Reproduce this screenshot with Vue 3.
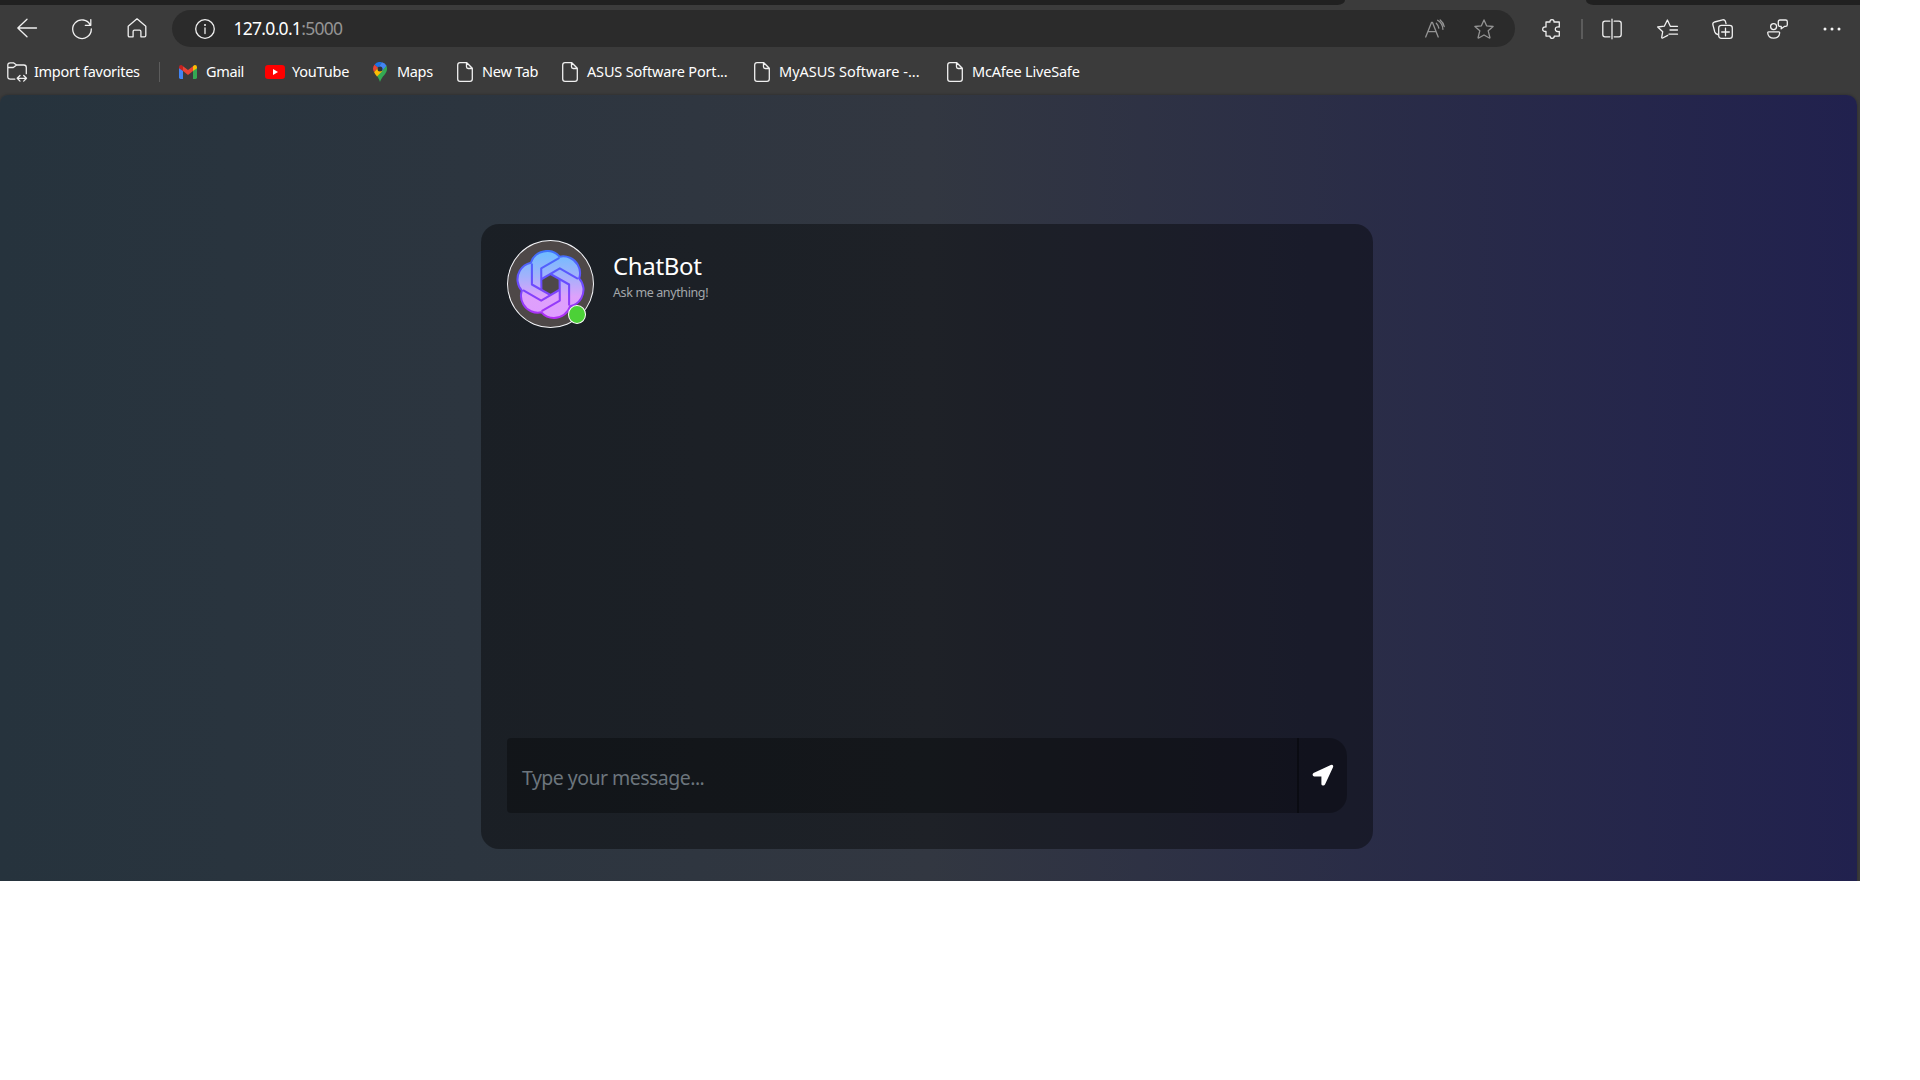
<script setup>
const bookmarks = [
  { label: 'Gmail', icon: 'gmail', width: 86, gap: 9, track: -0.35 },
  { label: 'YouTube', icon: 'youtube', width: 108, gap: 7, track: -0.2 },
  { label: 'Maps', icon: 'maps', width: 84, gap: 10, track: -0.35 },
  { label: 'New Tab', icon: 'page', width: 105, gap: 9, track: -0.25 },
  { label: 'ASUS Software Port...', icon: 'page', width: 192, gap: 9, track: -0.17 },
  { label: 'MyASUS Software -...', icon: 'page', width: 193, gap: 9, track: 0 },
  { label: 'McAfee LiveSafe', icon: 'page', width: 140, gap: 9, track: -0.2 },
]

const turns = [0, 60, 120, 180, 240, 300]
</script>

<template>
  <div class="window">
    <div class="tabstrip">
      <div class="tabs-left"></div>
      <div class="tabs-right"></div>
    </div>

    <div class="toolbar">
      <svg class="ico back" viewBox="0 0 20 20"><path d="M19.5 10H.8M10 1.2L.8 10l9.2 8.800" /></svg>
      <svg class="ico reload" viewBox="0 0 20 20"><path d="M18.4 6.2A9.3 9.3 0 1 0 19.3 10M18.8.6v5.7h-5.5" /></svg>
      <svg class="ico home" viewBox="0 0 20 20"><path d="M1.2 8.2L10 .8l8.8 7.4v9.3q0 1.3-1.3 1.3h-3.6v-5.4q0-1.3-1.3-1.3H7.4q-1.3 0-1.3 1.3v5.4H2.5q-1.3 0-1.3-1.3z" /></svg>

      <div class="address">
        <svg class="ico" viewBox="0 0 20 20"><circle cx="10" cy="10" r="9.3" /><path d="M10 9v5.6" /><circle class="solid" cx="10" cy="6" r="1" /></svg>
        <span class="url">127.0.0.1<span class="port">:5000</span></span>
        <svg class="ico dim read" viewBox="0 0 20 20"><path d="M.7 18L6.6 3.3h.8L13.2 18M2.8 12.6h8.4M11.3 4.2q2 2 2.5 5M12.6 1.3q5 3 5.300 9M15.2 1q3.5 3 4 6.500" /></svg>
        <svg class="ico dim star" viewBox="0 0 20 20"><path d="M10 .9l2.6 5.9 6.5.7-4.9 4.3 1.7 6.700q.1.700-.6.500L10 16l-5.300 3q-.7.200-.6-.5l1.700-6.700L.9 7.500l6.500-.7z" /></svg>
      </div>

      <svg class="ico puzzle" viewBox="0 0 20 20"><path d="M4 3h4q-.2-2.300 2-2.300T12 3h5.300v5q-4-.5-4 2.200t4 2.300v4.600h-5q0 2.200-2.100 2.200T8 17.100H4v-4.600q-3.300.2-3.300-2.300T4 8z" /></svg>
      <div class="rule"></div>
      <svg class="ico split" viewBox="0 0 20 20"><path d="M7.8 2.200H3Q.8 2.200.8 4.400v11.200q0 2.200 2.200 2.200h4.800M12.200 2.200H17q2.200 0 2.200 2.200v11.200q0 2.200-2.200 2.200h-4.800M10 .2v19.600" /></svg>
      <svg class="ico favs" viewBox="0 0 21 20"><path d="M15 7.300h-1.700L10.400 1 7.300 7.200.7 8l5 4.700-1 5.700q.1 1 1 .6l5-2.600M13 11h7.500M12 15.200h8.500M14.500 7.300h6" /></svg>
      <svg class="ico coll" viewBox="0 0 21 20"><path d="M5.800 15.500Q3.500 15 2.800 13L.9 5.800Q.4 3.700 2.500 3L10.600.8q2-.4 2.800 1.500l.6 2.300" /><rect x="6.700" y="6.300" width="13.600" height="13" rx="2.600" /><path d="M13.500 9.200v7.600M9.700 13h7.600" /></svg>
      <svg class="ico feedback" viewBox="0 0 21 20"><circle cx="6.600" cy="7.600" r="3" /><path d="M1.500 12.800h10.300q.9 0 .9 1-.4 5.400-6 5.400t-6-5.400q0-1 .8-1zM13 1h5.600q1.700 0 1.700 1.700v3q0 1.700-1.700 1.700h-1.200l-3.200 2.400V7.400H13q-1.700 0-1.700-1.700v-3Q11.300 1 13 1z" /></svg>
      <svg class="ico more" viewBox="0 0 20 20"><g class="solid"><circle cx="3" cy="10" r="1.500" /><circle cx="10" cy="10" r="1.500" /><circle cx="17" cy="10" r="1.500" /></g></svg>
    </div>

    <div class="bookmarks">
      <div class="import">
        <svg class="ico folder" viewBox="0 0 20 20"><path d="M7.800 17.200H3.300Q.8 17.200.8 14.700V3.300Q.8.900 3.200.9h3.600L9.600 3h7.200q2.500 0 2.500 2.500v6.200M.8 5.500h5.500L9.600 3M10.300 16.300h9.200M13 13.500l-2.800 2.800L13 19.100M16.700 13.500l2.800 2.800-2.800 2.800" /></svg>
        <span class="label">Import favorites</span>
      </div>
      <div class="rule short"></div>
      <div
        v-for="b in bookmarks"
        :key="b.label"
        class="bookmark"
        :style="{ width: b.width + 'px', gap: b.gap + 'px', letterSpacing: b.track + 'px' }"
      >
        <svg v-if="b.icon === 'gmail'" class="gmail" viewBox="0 0 18 14">
          <path fill="#4285f4" d="M0 2.500l4 3V14H1.400Q0 14 0 12.600z" />
          <path fill="#34a853" d="M18 2.500l-4 3V14h2.600q1.400 0 1.400-1.400z" />
          <path fill="#ea4335" d="M4 1.300L9 5l5-3.700v4.800L9 10 4 6.100z" />
          <path fill="#c5221f" d="M0 2.300Q0 0 2 0q.9 0 2 1.300v4.800L0 3.200z" />
          <path fill="#fbbc04" d="M18 2.300Q18 0 16 0q-.9 0-2 1.300v4.800l4-2.900z" />
        </svg>
        <svg v-else-if="b.icon === 'youtube'" class="youtube" viewBox="0 0 20 14">
          <rect width="20" height="14" rx="3.200" fill="#f00" /><path fill="#fff" d="M8 4l5 3-5 3z" />
        </svg>
        <svg v-else-if="b.icon === 'maps'" class="maps" viewBox="0 0 14 20">
          <path fill="#34a853" d="M14 7c0 5-5.200 7-7 13-.7-2.500-1.800-4.300-3-6l7-9 2.500-1.200Q14 5 14 7z" />
          <path fill="#fbbc04" d="M1 10l4-4.500 4.600 3.300L4 14.500Q1.800 12 1 10z" />
          <path fill="#ea4335" d="M1.600 2.500L5 5.500 1 10Q-1.200 6 1.600 2.500z" />
          <path fill="#1a73e8" d="M1.600 2.500Q4.500-1 9 .3L5 5.500z" />
          <path fill="#4285f4" d="M9 .3q3.200.8 4.500 3.500L9.400 8.600 5 5.500z" />
          <circle cx="7" cy="7" r="2.500" fill="#2d3238" />
        </svg>
        <svg v-else class="ico page" viewBox="0 0 16 20"><path d="M3 .7h6.800l5.500 5.600v10.700q0 2.300-2.300 2.300H3Q.7 19.300.7 17V3Q.7.700 3 .7zM9.500.7v4.100q0 1.700 1.700 1.700h4.100" /></svg>
        <span class="label">{{ b.label }}</span>
      </div>
    </div>

    <main class="viewport">
      <section class="card">
        <header class="head">
          <div class="avatar">
            <svg class="logo" viewBox="0 0 24 24">
              <defs>
                <linearGradient id="line" gradientUnits="userSpaceOnUse" x1="0" y1="0" x2="0" y2="24">
                  <stop offset="0" stop-color="#3d74fa" /><stop offset=".45" stop-color="#654dff" /><stop offset="1" stop-color="#b52df5" />
                </linearGradient>
                <linearGradient id="petal" gradientUnits="userSpaceOnUse" x1="0" y1="1" x2="0" y2="23">
                  <stop offset="0" stop-color="#72bcff" /><stop offset=".35" stop-color="#a0b2fb" /><stop offset=".7" stop-color="#dea1fb" /><stop offset="1" stop-color="#df9dff" />
                </linearGradient>
                <mask id="strokes" maskUnits="userSpaceOnUse" x="0" y="0" width="24" height="24">
                  <path
                    v-for="t in turns"
                    :key="t"
                    :transform="`translate(12 12) rotate(${t})`"
                    d="M-6.470-7.300V0L0 3.650"
                    fill="none" stroke="#fff" stroke-width=".72" stroke-linejoin="round"
                  />
                  <path class="rim" transform="translate(.36 .36) scale(.97)" d="M22.2819 9.8211a5.9847 5.9847 0 0 0-.5157-4.9108 6.0462 6.0462 0 0 0-6.5098-2.9A6.0651 6.0651 0 0 0 4.9807 4.1818a5.9847 5.9847 0 0 0-3.9977 2.9 6.0462 6.0462 0 0 0 .7427 7.0966 5.98 5.98 0 0 0 .511 4.9107 6.051 6.051 0 0 0 6.5146 2.9001A5.9847 5.9847 0 0 0 13.2599 24a6.0557 6.0557 0 0 0 5.7718-4.2058 5.9894 5.9894 0 0 0 3.9977-2.9001 6.0557 6.0557 0 0 0-.7475-7.0729z" />
                </mask>
              </defs>
              <path fill="url(#petal)" transform="translate(.36 .36) scale(.97)" d="M22.2819 9.8211a5.9847 5.9847 0 0 0-.5157-4.9108 6.0462 6.0462 0 0 0-6.5098-2.9A6.0651 6.0651 0 0 0 4.9807 4.1818a5.9847 5.9847 0 0 0-3.9977 2.9 6.0462 6.0462 0 0 0 .7427 7.0966 5.98 5.98 0 0 0 .511 4.9107 6.051 6.051 0 0 0 6.5146 2.9001A5.9847 5.9847 0 0 0 13.2599 24a6.0557 6.0557 0 0 0 5.7718-4.2058 5.9894 5.9894 0 0 0 3.9977-2.9001 6.0557 6.0557 0 0 0-.7475-7.0729z" />
              <path d="M12 8.350l3.160 1.825v3.650L12 15.650l-3.160-1.825v-3.650z" fill="#4e4848" />
              <rect width="24" height="24" fill="url(#line)" mask="url(#strokes)" />
            </svg>
            <span class="online"></span>
          </div>
          <div class="titles">
            <div class="name">ChatBot</div>
            <div class="tagline">Ask me anything!</div>
          </div>
        </header>
        <form class="composer" @submit.prevent>
          <div class="field">Type your message...</div>
          <div class="send">
            <svg viewBox="0 0 22 22"><path d="M1.500 8.900L18.800 1q1.700-.5 2.200.4t-.1 2.100L13 20.500q-.8 1.400-2.300 1T9.400 19.700V12.500H2.300Q.8 12.400.6 11t.9-2.100z" /></svg>
          </div>
        </form>
      </section>
    </main>
  </div>
</template>

<style>
body { margin: 0; background: #fff; }
</style>

<style scoped>
.window {
  width: 1860px;
  height: 881px;
  overflow: hidden;
  background: #3b3b3b;
  color: #fff;
  font-family: "Noto Sans", "Open Sans", sans-serif;
}
.tabstrip { display: flex; justify-content: space-between; height: 5px; }
.tabs-left { width: 1345px; background: #202020; border-bottom-right-radius: 9px 6px; }
.tabs-right { width: 274px; background: #202020; border-bottom-left-radius: 9px 6px; }

.ico {
  width: 20px; height: 20px; flex: none; overflow: visible;
  fill: none; stroke: #f0f0f0; stroke-width: 1.300; stroke-linecap: round; stroke-linejoin: round;
}
.ico .solid { fill: #f4f4f4; stroke: none; }
.ico.dim { stroke: #949494; }

.toolbar { display: flex; align-items: center; height: 47px; box-sizing: border-box; padding: 0 18px 0 17px; }
.back { margin-top: -1px; }
.reload { margin-left: 35px; }
.home { margin-left: 35px; margin-top: -1px; }
.address {
  display: flex; align-items: center; box-sizing: border-box;
  width: 1343px; height: 37px; margin-left: 25px; padding: 0 21px 0 22.500px;
  border-radius: 19px; background: #2b2b2b;
}
.url { margin-left: 19px; padding-bottom: 2px; font-size: 17.500px; letter-spacing: -.72px; line-height: 24px; }
.port { color: #949494; }
.read { margin-left: auto; }
.star { margin-left: 29px; }
.puzzle { margin-left: 27px; }
.rule { flex: none; width: 2px; height: 20px; margin-left: 19px; background: #5c5c5c; }
.split { margin-left: 18.500px; }
.favs { width: 21px; margin-left: 35.500px; }
.coll { width: 21px; margin-left: 34px; }
.feedback { width: 21px; margin-left: 34px; }
.more { margin-left: 34px; }

.bookmarks {
  display: flex; align-items: center; height: 39px; margin-bottom: 4px; padding-left: 7px;
  font-size: 14.500px; white-space: nowrap;
}
.label { padding-bottom: 2px; }
.import { display: flex; align-items: center; gap: 7px; width: 152px; letter-spacing: -.3px; }
.rule.short { width: 1px; margin: 0 19px 0 0; }
.bookmark { display: flex; align-items: center; flex: none; }
.bookmark svg { flex: none; }
.gmail { width: 18px; height: 14px; }
.youtube { width: 20px; height: 14px; }
.maps { width: 14px; height: 20px; }
.page { width: 16px; }

.viewport {
  display: flex; justify-content: center; align-items: flex-start; box-sizing: border-box;
  width: 1857px; height: 786px; padding: 129px 3px 0 0;
  border-radius: 8px 10px 0 0;
  background: linear-gradient(to right, #26333d, #323741 50%, #21214e);
  box-shadow: 0 0 3px rgba(0, 0, 0, .3);
}
.card {
  display: flex; flex-direction: column; justify-content: space-between; box-sizing: border-box;
  width: 892px; height: 625px; padding: 16px 26px 36px;
  border-radius: 18px; background: rgba(0, 0, 0, .4);
}
.head { display: flex; }
.avatar {
  position: relative; display: flex; align-items: center; justify-content: center; box-sizing: border-box;
  width: 87px; height: 88px; border: 1.500px solid #f5f6fa; border-radius: 50%; background: #4e4848;
}
.logo { width: 69px; height: 69px; }
.rim { fill: none; stroke: #fff; stroke-width: .74; }
.online {
  position: absolute; right: 7px; bottom: 3px; box-sizing: border-box;
  width: 18px; height: 19px; border: 1.500px solid #fff; border-radius: 50%; background: #4cd137;
}
.titles { margin: 9px 0 0 19px; }
.name { font-size: 24px; line-height: 34px; letter-spacing: -.35px; }
.tagline { margin-top: 1px; color: #a3a7aa; font-size: 12.500px; line-height: 18px; letter-spacing: -.38px; }
.composer { display: flex; height: 75px; }
.field {
  box-sizing: border-box; width: 790px; padding-left: 15px; border-radius: 4px 0 0 4px;
  background: rgba(0, 0, 0, .3); color: #6c757d; font-size: 19.500px; letter-spacing: -.53px; line-height: 79px;
}
.send {
  display: flex; align-items: center; justify-content: center; box-sizing: border-box;
  width: 50px; padding: 0 1px 1px 0; border-left: 2px solid rgba(0, 0, 0, .38); border-radius: 0 18px 18px 0;
  background: rgba(0, 0, 0, .3);
}
.send svg { width: 22px; height: 22px; fill: #fff; }
</style>
